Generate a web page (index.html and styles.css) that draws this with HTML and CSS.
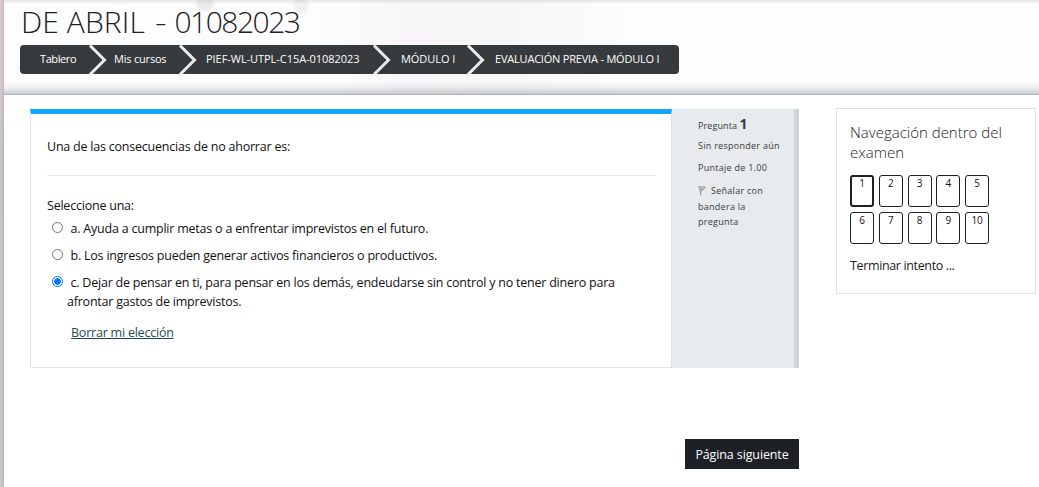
FILE: index.html
```
<!DOCTYPE html>
<html lang="es">
<head>
<meta charset="utf-8">
<title>Evaluación previa - Módulo I</title>
<link rel="stylesheet" href="styles.css">
</head>
<body>
<div class="page">
  <header class="header">
    <h1 class="title">DE ABRIL <span class="dash">-</span> <span class="code">01082023</span></h1>
    <nav class="crumbs">
      <span class="crumb c1">Tablero</span>
      <svg class="chev" viewBox="0 0 20 30"><path d="M2 0.5 L16.5 15 L2 29.5"/></svg>
      <span class="crumb c2">Mis cursos</span>
      <svg class="chev" viewBox="0 0 20 30"><path d="M2 0.5 L16.5 15 L2 29.5"/></svg>
      <span class="crumb c3">PIEF-WL-UTPL-C15A-01082023</span>
      <svg class="chev" viewBox="0 0 20 30"><path d="M2 0.5 L16.5 15 L2 29.5"/></svg>
      <span class="crumb c4">MÓDULO I</span>
      <svg class="chev" viewBox="0 0 20 30"><path d="M2 0.5 L16.5 15 L2 29.5"/></svg>
      <span class="crumb c5">EVALUACIÓN PREVIA - MÓDULO I</span>
    </nav>
  </header>
  <div class="body">
    <main class="main">
      <section class="question">
        <div class="content">
          <p class="prompt">Una de las consecuencias de no ahorrar es:</p>
          <p class="select">Seleccione una:</p>
          <label class="option"><span class="radio"></span><span class="answer">a. Ayuda a cumplir metas o a enfrentar imprevistos en el futuro.</span></label>
          <label class="option"><span class="radio"></span><span class="answer">b. Los ingresos pueden generar activos financieros o productivos.</span></label>
          <label class="option last"><span class="radio on"></span><span class="answer">c. Dejar de pensar en ti, para pensar en los demás, endeudarse sin control y no tener dinero para<br><span class="wrap">afrontar gastos de imprevistos.</span></span></label>
          <a class="clear">Borrar mi elección</a>
        </div>
        <aside class="info">
          <p class="qno">Pregunta <b>1</b></p>
          <p class="state">Sin responder aún</p>
          <p class="grade">Puntaje de 1.00</p>
          <p class="flag"><svg class="flag-icon" viewBox="0 0 9 10"><path d="M0.5 1H7.2L5.2 3.6L3 5.2M1.5 1L3 9.3M2.2 3.2L5.2 3"/></svg>Señalar con<br>bandera la<br>pregunta</p>
        </aside>
      </section>
      <button class="next">Página siguiente</button>
    </main>
    <aside class="nav">
      <h2 class="nav-title">Navegación dentro del<br>examen</h2>
      <div class="grid">
        <span class="cell current">1</span><span class="cell">2</span><span class="cell">3</span><span class="cell">4</span><span class="cell">5</span>
        <span class="cell">6</span><span class="cell">7</span><span class="cell">8</span><span class="cell">9</span><span class="cell">10</span>
      </div>
      <a class="finish">Terminar intento ...</a>
    </aside>
  </div>
</div>
</body>
</html>
```
FILE: styles.css
```
* { box-sizing: border-box; margin: 0; padding: 0; }
body {
  height: 487px;
  overflow: hidden;
  padding-left: 4px;
  background: linear-gradient(#d8c8cc, #cfc5c8 110px, #c3c5c8 150px, #c4c6c8);
  font: 12.5px/19px "Open Sans", "Noto Sans", sans-serif;
  letter-spacing: -.22px;
  color: #111;
  white-space: nowrap;
}
.page { height: 487px; background: #fff; box-shadow: 0 0 2px rgba(0,0,0,.25); }
.header {
  height: 95px;
  padding: 4px 16px 0;
  border-bottom: 1px solid #aab2ba;
  background:
    linear-gradient(rgba(0,0,0,.09), transparent 4px),
    linear-gradient(transparent 82px, rgba(90,95,100,.1) 88px, rgba(90,95,100,.3) 94px),
    radial-gradient(ellipse 11px 10px at 201px 3px, rgba(0,0,0,.07) 60%, transparent),
    radial-gradient(ellipse 9px 11px at 297px 5px, rgba(0,0,0,.05) 60%, transparent),
    linear-gradient(90deg, #fdfdfd, #fdfcfd 340px, #f8f6f8 400px, #f8f7f8 500px, #fdfdfd 640px, #fdfdfd);
}
.title { padding-left: 1px; height: 41px; font-size: 30px; line-height: 36px; font-weight: 300; letter-spacing: .1px; color: #1d2125; }
.dash { margin: 0 -1px 0 3px; display: inline-block; transform: scaleX(1.2); }
.code { margin-left: 2px; letter-spacing: -1.5px; }
.crumbs { display: flex; align-items: center; width: 659px; height: 29px; padding-left: 20px; border-radius: 4px; background: #373a3c; color: #fff; font-size: 11px; letter-spacing: -.05px; }
.crumb { flex: none; height: 21px; }
.c1 { width: 48px; letter-spacing: -.4px; }
.c2 { width: 64px; letter-spacing: -.2px; }
.c3 { width: 166px; }
.c4 { width: 65px; }
.c5 { letter-spacing: -.2px; }
.chev { flex: none; width: 20px; height: 30px; margin-right: 9px; }
.c1 + .chev { margin-right: 6px; }
.c2 + .chev { margin-right: 8px; }
.chev path { fill: none; stroke: #e9ecef; stroke-width: 3; }
.body { display: flex; align-items: flex-start; padding: 13px 3px 0 26px; }
.main { width: 769px; padding-top: 1px; }
.question { display: flex; height: 259px; }
.content { width: 642px; padding: 23px 16px 0; border: 1px solid #dee2e6; border-top: 5px solid #0fa6fd; }
.prompt { height: 39px; border-bottom: 1px solid #e9e9e9; }
.select { padding-top: 20px; height: 43px; }
.option { display: flex; height: 27px; }
.option.last { height: 46px; }
.radio { flex: none; width: 11px; height: 11px; margin: 3px 8px 0 4.5px; border: 1px solid #767676; border-radius: 50%; background: #fff; }
.radio.on { border-color: #0075ff; background: radial-gradient(circle, #0075ff 3px, #fff 3.5px); }
.wrap { margin-left: -3.5px; }
.clear { display: inline-block; margin: 4px 0 0 24px; color: #1f4a57; text-decoration: underline; }
.info { width: 127px; padding: 5px 0 0 26px; border-right: 5px solid #ced4da; background: #e7ebee; font-size: 9px; line-height: 15.5px; letter-spacing: .27px; color: #373a3c; }
.qno { height: 24px; line-height: 20px; letter-spacing: .1px; }
.qno b { font-size: 14px; }
.state { height: 22px; }
.grade { height: 23px; }
.flag-icon { width: 9px; height: 10px; margin-right: 4px; vertical-align: -2px; }
.flag-icon path { fill: none; stroke: #888; stroke-width: 1; }
.next { display: block; width: 114px; height: 30px; margin: 71px 0 0 auto; border: 0; background: #1d2125; color: #fff; font: inherit; letter-spacing: -.12px; }
.nav { width: 200px; height: 186px; margin-left: 37px; padding: 13px 0 0 13px; border: 1px solid #dee2e6; }
.nav-title { font-size: 15px; line-height: 20px; font-weight: 300; letter-spacing: 0; color: #1d2125; }
.grid { display: grid; grid-template-columns: repeat(5, 24px); grid-auto-rows: 32px; gap: 5px 4.75px; margin: 13px 0 12px; }
.cell { border: 1px solid #1d2125; border-radius: 3px; text-align: center; font-size: 10px; line-height: 15px; }
.cell.current { border-width: 2px; line-height: 13px; }
.finish { color: #1d2125; letter-spacing: -.36px; }
```
